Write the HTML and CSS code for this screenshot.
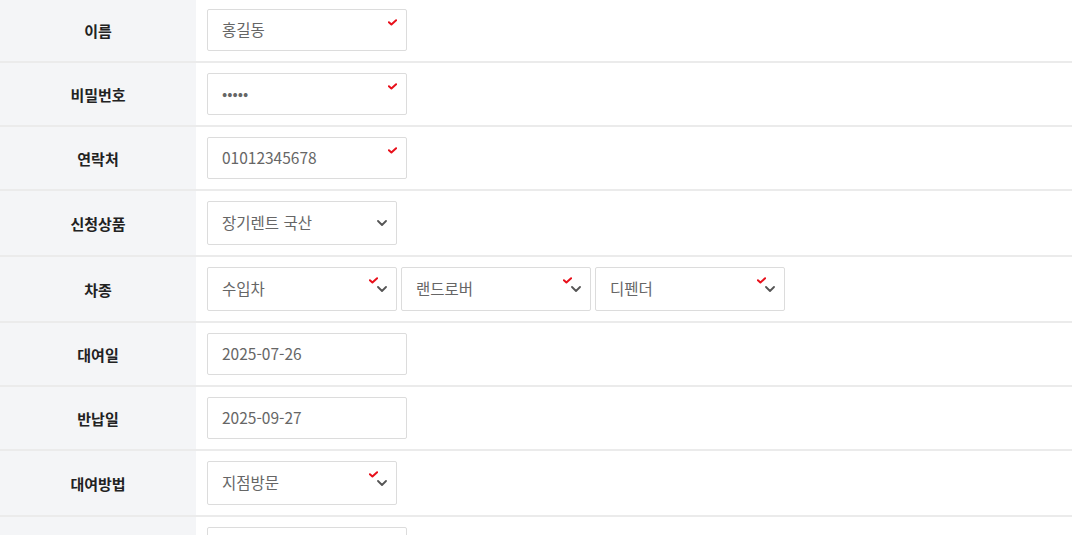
FILE: index.html
```html
<!DOCTYPE html>
<html lang="ko">
<head>
    <meta charset="UTF-8">
    <meta name="viewport" content="width=device-width, initial-scale=1.0">
    <title>예약 신청</title>
    <link rel="stylesheet" href="styles.css">
</head>
<body>

    <table class="formTable">
        <tr>
            <th>이름</th>
            <td>
                <div class="field">
                    <input type="text" value="홍길동">
                    <svg class="req" viewBox="0 0 10 7"><polyline points="1,3.2 3.8,5.8 9,1"/></svg>
                </div>
            </td>
        </tr>
        <tr>
            <th>비밀번호</th>
            <td>
                <div class="field">
                    <input type="password" value="12345">
                    <svg class="req" viewBox="0 0 10 7"><polyline points="1,3.2 3.8,5.8 9,1"/></svg>
                </div>
            </td>
        </tr>
        <tr>
            <th>연락처</th>
            <td>
                <div class="field">
                    <input type="text" value="01012345678">
                    <svg class="req" viewBox="0 0 10 7"><polyline points="1,3.2 3.8,5.8 9,1"/></svg>
                </div>
            </td>
        </tr>
        <tr class="selRow">
            <th>신청상품</th>
            <td>
                <div class="selBox">
                    <select>
                        <option>장기렌트 국산</option>
                    </select>
                    <svg class="arrow" viewBox="0 0 10 6"><polyline points="1,1 5,5 9,1"/></svg>
                </div>
            </td>
        </tr>
        <tr class="selRow">
            <th>차종</th>
            <td>
                <div class="selGroup">
                    <div class="selBox">
                        <select>
                            <option>수입차</option>
                        </select>
                        <svg class="req" viewBox="0 0 10 7"><polyline points="1,3.2 3.8,5.8 9,1"/></svg>
                        <svg class="arrow" viewBox="0 0 10 6"><polyline points="1,1 5,5 9,1"/></svg>
                    </div>
                    <div class="selBox">
                        <select>
                            <option>랜드로버</option>
                        </select>
                        <svg class="req" viewBox="0 0 10 7"><polyline points="1,3.2 3.8,5.8 9,1"/></svg>
                        <svg class="arrow" viewBox="0 0 10 6"><polyline points="1,1 5,5 9,1"/></svg>
                    </div>
                    <div class="selBox">
                        <select>
                            <option>디펜더</option>
                        </select>
                        <svg class="req" viewBox="0 0 10 7"><polyline points="1,3.2 3.8,5.8 9,1"/></svg>
                        <svg class="arrow" viewBox="0 0 10 6"><polyline points="1,1 5,5 9,1"/></svg>
                    </div>
                </div>
            </td>
        </tr>
        <tr>
            <th>대여일</th>
            <td>
                <div class="field">
                    <input type="text" value="2025-07-26">
                </div>
            </td>
        </tr>
        <tr>
            <th>반납일</th>
            <td>
                <div class="field">
                    <input type="text" value="2025-09-27">
                </div>
            </td>
        </tr>
        <tr class="selRow">
            <th>대여방법</th>
            <td>
                <div class="selBox">
                    <select>
                        <option>지점방문</option>
                    </select>
                    <svg class="req" viewBox="0 0 10 7"><polyline points="1,3.2 3.8,5.8 9,1"/></svg>
                    <svg class="arrow" viewBox="0 0 10 6"><polyline points="1,1 5,5 9,1"/></svg>
                </div>
            </td>
        </tr>
        <tr>
            <th>요청사항</th>
            <td>
                <div class="field">
                    <input type="text" value="">
                </div>
            </td>
        </tr>
    </table>

</body>
</html>
```

FILE: styles.css
```css
html {
    background-color: #FFFFFF;
}
body {
    margin: 0;
    font-family: "Noto Sans CJK KR", "Noto Sans", sans-serif;
    color: #222;
}
.formTable {
    width: 100%;
    border-collapse: collapse;
    margin-top: -1px;
}
.formTable tr {
    border-bottom: 2px solid #ebebeb;
}
.formTable th {
    width: 196px;
    padding: 0;
    background: #f4f5f7;
    font-size: 15px;
    font-weight: bold;
    color: #222;
    text-align: center;
}
.formTable td {
    padding: 10px 10px 10px 11px;
    line-height: 0;
}

.field {
    position: relative;
    display: inline-block;
    width: 200px;
    height: 42px;
}
.field input {
    width: 100%;
    height: 100%;
    box-sizing: border-box;
    border: 1px solid #dcdcdc;
    border-radius: 2px;
    padding: 0 14px 2px;
    font-family: "Noto Sans CJK KR", "Noto Sans", sans-serif;
    font-size: 15.5px;
    color: #666;
    outline: none;
}
.field .req {
    position: absolute;
    top: 10px;
    right: 10px;
}

.req {
    width: 9px;
    height: 7px;
}
.req polyline {
    fill: none;
    stroke: #e8101b;
    stroke-width: 2.2;
    stroke-linecap: round;
    stroke-linejoin: round;
}

.selGroup {
    display: flex;
    gap: 4px;
}
.selBox {
    position: relative;
    display: inline-block;
    width: 190px;
    height: 44px;
}
.selBox select {
    width: 100%;
    height: 100%;
    box-sizing: border-box;
    border: 1px solid #dcdcdc;
    border-radius: 2px;
    padding: 0 14px 2px;
    background: #FFFFFF;
    font-family: "Noto Sans CJK KR", "Noto Sans", sans-serif;
    font-size: 15.5px;
    color: #666;
    -webkit-appearance: none;
    appearance: none;
    outline: none;
}
.selBox .req {
    position: absolute;
    top: 10px;
    right: 19px;
}
.selBox .arrow {
    position: absolute;
    top: 19px;
    right: 10px;
    width: 10px;
    height: 6px;
}
.arrow polyline {
    fill: none;
    stroke: #555;
    stroke-width: 1.8;
    stroke-linecap: round;
    stroke-linejoin: round;
}
```
